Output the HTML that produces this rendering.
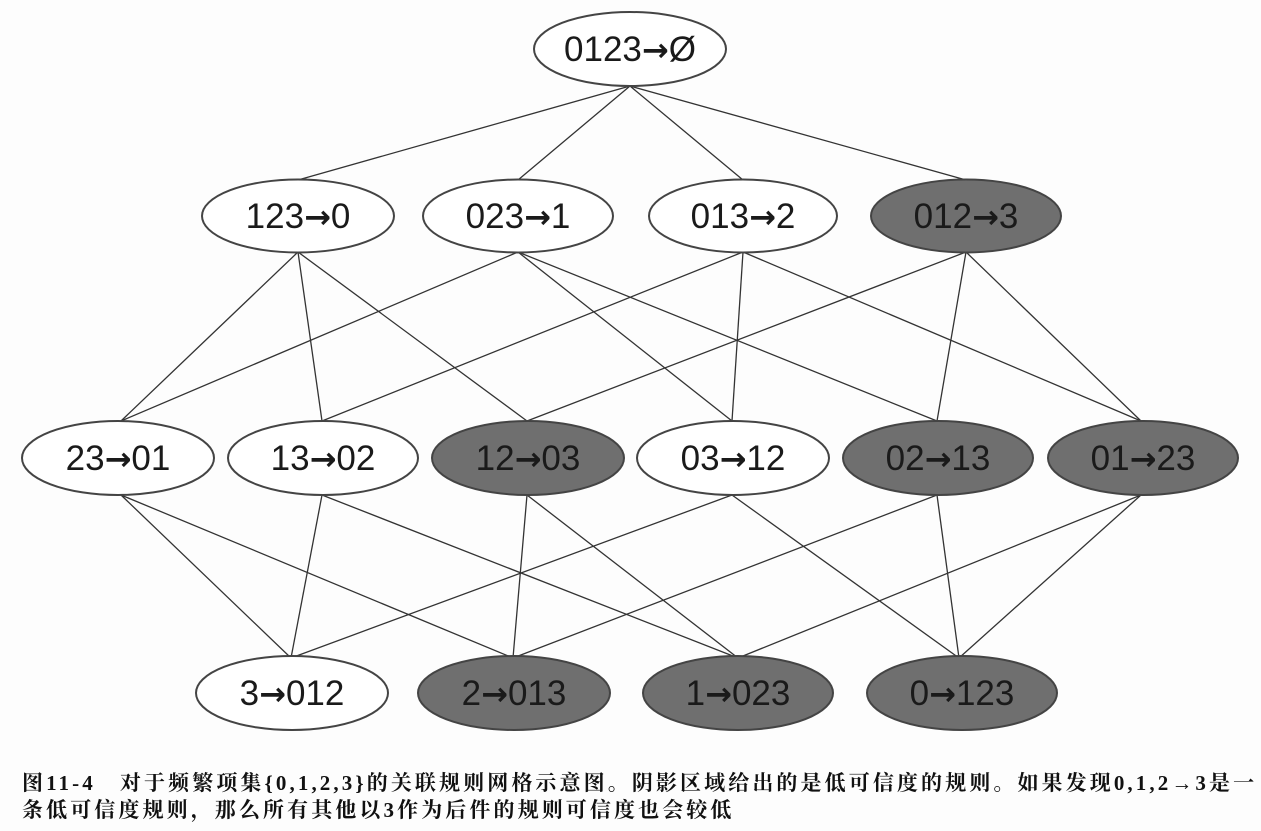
<!DOCTYPE html>
<html><head><meta charset="utf-8"><style>
html,body{margin:0;padding:0;background:#fdfdfd;}
body{width:1261px;height:831px;overflow:hidden;position:relative;}
svg{position:absolute;left:0;top:0;}
.cap{position:absolute;left:22px;font-family:"Liberation Serif","Noto Serif CJK SC",serif;font-weight:bold;font-size:21px;letter-spacing:3.1px;color:#111;white-space:nowrap;}
.a{font-family:"DejaVu Sans",sans-serif;font-size:32px;font-weight:bold;}
</style></head><body>
<svg width="1261" height="740" viewBox="0 0 1261 740">
<g stroke="#333" stroke-width="1.3" fill="none">
<line x1="630" y1="86" x2="298" y2="180"/><line x1="630" y1="86" x2="518" y2="180"/><line x1="630" y1="86" x2="743" y2="180"/><line x1="630" y1="86" x2="966" y2="180"/>
<line x1="298" y1="252" x2="121" y2="421"/><line x1="298" y1="252" x2="322" y2="421"/><line x1="298" y1="252" x2="527" y2="421"/>
<line x1="518" y1="252" x2="121" y2="421"/><line x1="518" y1="252" x2="732" y2="421"/><line x1="518" y1="252" x2="937" y2="421"/>
<line x1="743" y1="252" x2="322" y2="421"/><line x1="743" y1="252" x2="732" y2="421"/><line x1="743" y1="252" x2="1141" y2="421"/>
<line x1="966" y1="252" x2="527" y2="421"/><line x1="966" y1="252" x2="937" y2="421"/><line x1="966" y1="252" x2="1141" y2="421"/>
<line x1="121" y1="495" x2="291" y2="658"/><line x1="322" y1="495" x2="291" y2="658"/><line x1="732" y1="495" x2="291" y2="658"/>
<line x1="121" y1="495" x2="513" y2="658"/><line x1="527" y1="495" x2="513" y2="658"/><line x1="937" y1="495" x2="513" y2="658"/>
<line x1="322" y1="495" x2="738" y2="658"/><line x1="527" y1="495" x2="738" y2="658"/><line x1="1141" y1="495" x2="738" y2="658"/>
<line x1="732" y1="495" x2="959" y2="658"/><line x1="937" y1="495" x2="959" y2="658"/><line x1="1141" y1="495" x2="959" y2="658"/>
</g>
<g stroke="#444" stroke-width="2">
<ellipse cx="630" cy="49" rx="96" ry="37" fill="#fff"/>
<ellipse cx="298" cy="216" rx="96" ry="36.5" fill="#fff"/>
<ellipse cx="518" cy="216" rx="95" ry="36.5" fill="#fff"/>
<ellipse cx="743" cy="216" rx="94" ry="36.5" fill="#fff"/>
<ellipse cx="966" cy="216" rx="95" ry="36.5" fill="#6f6f6f"/>
<ellipse cx="118" cy="458" rx="96" ry="37" fill="#fff"/>
<ellipse cx="323" cy="458" rx="95" ry="37" fill="#fff"/>
<ellipse cx="528" cy="458" rx="96" ry="37" fill="#6f6f6f"/>
<ellipse cx="733" cy="458" rx="96" ry="37" fill="#fff"/>
<ellipse cx="938" cy="458" rx="95" ry="37" fill="#6f6f6f"/>
<ellipse cx="1143" cy="458" rx="95" ry="37" fill="#6f6f6f"/>
<ellipse cx="292" cy="693" rx="96" ry="37" fill="#fff"/>
<ellipse cx="514" cy="693" rx="96" ry="37" fill="#6f6f6f"/>
<ellipse cx="738" cy="693" rx="95" ry="37" fill="#6f6f6f"/>
<ellipse cx="962" cy="693" rx="95" ry="37" fill="#6f6f6f"/>
</g>
<g font-family="Liberation Sans, sans-serif" font-size="35" fill="#1a1a1a" text-anchor="middle">
<text x="630" y="61">0123<tspan class="a">→</tspan>Ø</text>
<text x="298" y="228">123<tspan class="a">→</tspan>0</text><text x="518" y="228">023<tspan class="a">→</tspan>1</text><text x="743" y="228">013<tspan class="a">→</tspan>2</text><text x="966" y="228">012<tspan class="a">→</tspan>3</text>
<text x="118" y="470">23<tspan class="a">→</tspan>01</text><text x="323" y="470">13<tspan class="a">→</tspan>02</text><text x="528" y="470">12<tspan class="a">→</tspan>03</text><text x="733" y="470">03<tspan class="a">→</tspan>12</text><text x="938" y="470">02<tspan class="a">→</tspan>13</text><text x="1143" y="470">01<tspan class="a">→</tspan>23</text>
<text x="292" y="705">3<tspan class="a">→</tspan>012</text><text x="514" y="705">2<tspan class="a">→</tspan>013</text><text x="738" y="705">1<tspan class="a">→</tspan>023</text><text x="962" y="705">0<tspan class="a">→</tspan>123</text>
</g>
</svg>
<div class="cap" style="top:767px;">图11-4　对于频繁项集{0,1,2,3}的关联规则网格示意图。阴影区域给出的是低可信度的规则。如果发现0,1,2→3是一</div>
<div class="cap" style="top:794px;">条低可信度规则，那么所有其他以3作为后件的规则可信度也会较低</div>
</body></html>
